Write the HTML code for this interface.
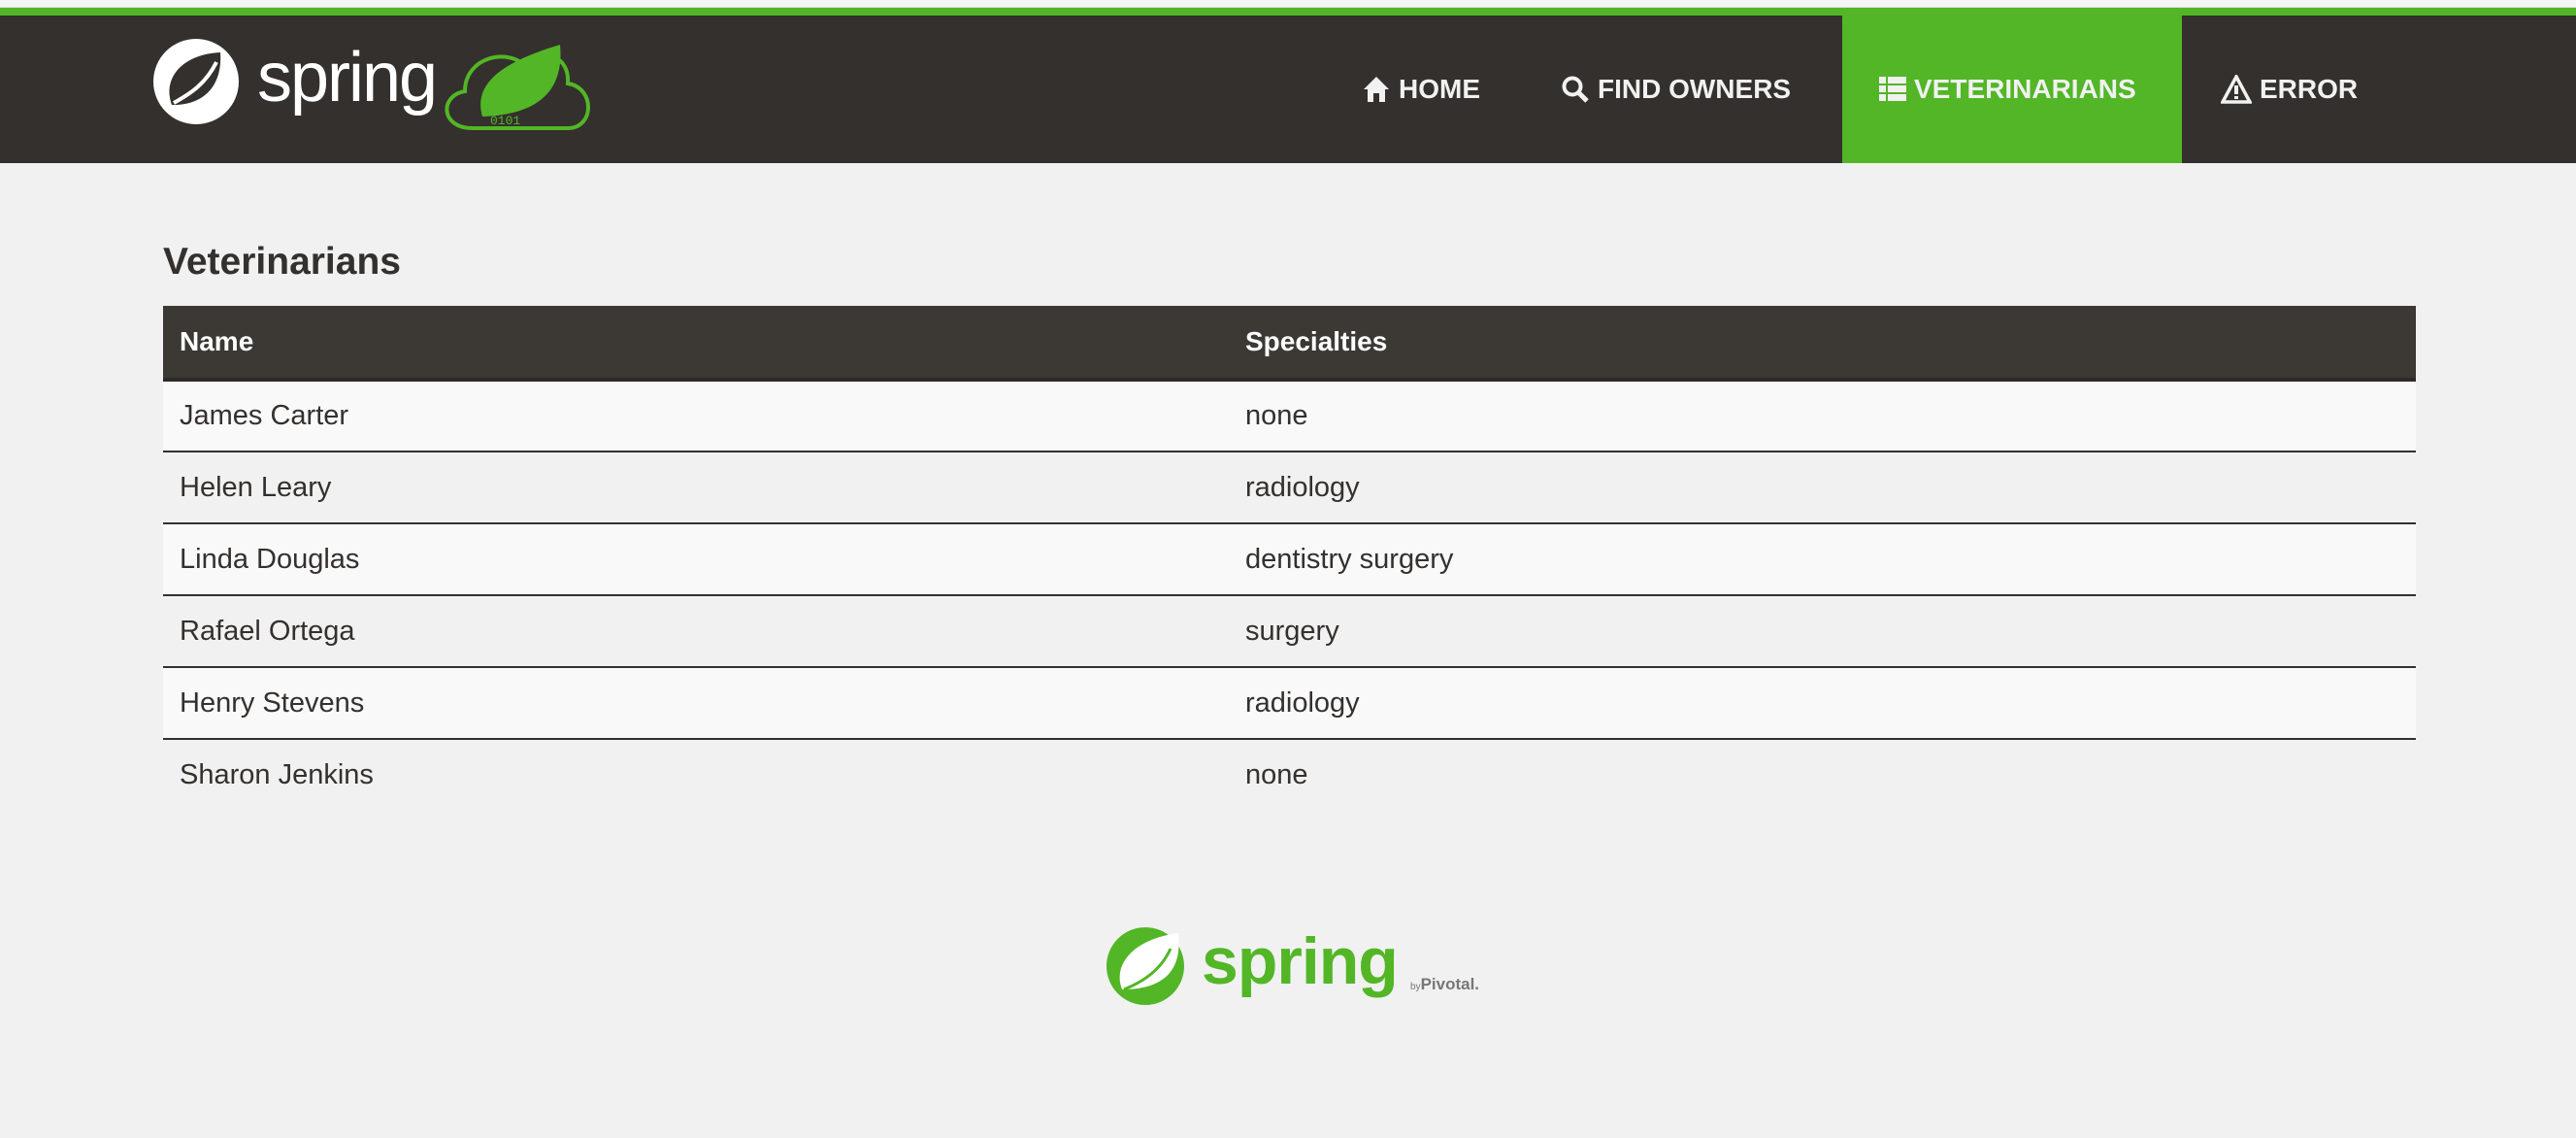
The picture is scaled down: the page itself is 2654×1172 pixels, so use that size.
<!DOCTYPE html>
<html><head><meta charset="utf-8"><style>
*{margin:0;padding:0;box-sizing:border-box}
body{width:2654px;height:1172px;background:#f1f1f1;font-family:"Liberation Sans",sans-serif;position:relative;overflow:hidden}
.top{position:absolute;left:0;top:0;width:2654px;height:8px;background:#f5f5f5;border-bottom:1px solid #ddd}
.green{position:absolute;left:0;top:8px;width:2654px;height:8px;background:#52b626}
.nav{position:absolute;left:0;top:16px;width:2654px;height:152px;background:#34302d}
.item{position:absolute;top:0;height:152px;display:flex;align-items:center;color:#f1f1f1;font-weight:bold;font-size:28px;letter-spacing:0}
.item svg{margin-right:8px}
.active{background:#52b626}
h2{position:absolute;left:168px;top:248px;font-size:39px;color:#34302d;font-weight:bold}
table{position:absolute;left:168px;top:315px;width:2321px;border-collapse:collapse;font-size:29px;color:#34302d}
th{background:#3c3834;color:#fff;text-align:left;height:76px;padding-left:17px;border-bottom:4px solid #2d2a27;font-size:28px}
td{height:74px;padding-left:17px;border-top:2px solid #34302d}
tr:nth-child(odd) td{background:#f9f9f9}
tr:nth-child(even) td{background:#f1f1f1}
tbody tr:first-child td{border-top:none}
</style></head><body>
<div class="top"></div><div class="green"></div>
<div class="nav">
 <svg style="position:absolute;left:157px;top:20px" width="460" height="100" viewBox="0 0 460 100">
  <circle cx="45" cy="48" r="44" fill="#fff"/>
  <path d="M20 72 C10 45 30 20 70 18 C72 45 60 70 25 72 Z" fill="#34302d"/>
  <path d="M22 70 C40 60 55 50 66 28" stroke="#fff" stroke-width="4" fill="none"/>
  <text x="108" y="68" font-family="Liberation Sans,sans-serif" font-size="72" fill="#fff" letter-spacing="-2">spring</text>
  <path d="M330 96 C296 96 296 62 322 58 C322 22 368 12 386 34 C404 12 430 22 428 50 C456 54 456 96 428 96 Z" fill="none" stroke="#52b626" stroke-width="4"/>
  <path d="M340 84 C330 50 360 28 420 10 C424 52 404 82 340 84 Z" fill="#52b626"/>
  <text x="348" y="92" font-size="13" fill="#52b626" font-family="Liberation Mono,monospace">0101</text>
 </svg>
 <div class="item" style="left:1403px"><svg width="30" height="30" viewBox="0 0 30 30"><path d="M15 2 L28 15 H24 V28 H18 V19 H12 V28 H6 V15 H2 Z" fill="#f1f1f1"/></svg>HOME</div>
 <div class="item" style="left:1608px"><svg width="30" height="30" viewBox="0 0 30 30"><circle cx="12" cy="12" r="8.5" stroke="#f1f1f1" stroke-width="4" fill="none"/><path d="M18 18 L27 27" stroke="#f1f1f1" stroke-width="5"/></svg>FIND OWNERS</div>
 <div class="item active" style="left:1898px;width:350px;padding-left:38px"><svg width="28" height="30" viewBox="0 0 28 30"><g fill="#f1f1f1"><rect x="0" y="2" width="7" height="7"/><rect x="9" y="2" width="19" height="7"/><rect x="0" y="11" width="7" height="7"/><rect x="9" y="11" width="19" height="7"/><rect x="0" y="20" width="7" height="7"/><rect x="9" y="20" width="19" height="7"/></g></svg>VETERINARIANS</div>
 <div class="item" style="left:2288px"><svg width="32" height="30" viewBox="0 0 32 30"><path d="M16 2 L30 28 H2 Z" fill="none" stroke="#f1f1f1" stroke-width="3.5"/><rect x="14" y="11" width="4" height="9" fill="#f1f1f1"/><rect x="14" y="22" width="4" height="3" fill="#f1f1f1"/></svg>ERROR</div>
</div>
<h2>Veterinarians</h2>
<table>
<thead><tr><th style="width:1098px">Name</th><th>Specialties</th></tr></thead>
<tbody>
<tr><td>James Carter</td><td>none</td></tr>
<tr><td>Helen Leary</td><td>radiology</td></tr>
<tr><td>Linda Douglas</td><td>dentistry surgery</td></tr>
<tr><td>Rafael Ortega</td><td>surgery</td></tr>
<tr><td>Henry Stevens</td><td>radiology</td></tr>
<tr><td>Sharon Jenkins</td><td>none</td></tr>
</tbody></table>
<svg style="position:absolute;left:1138px;top:953px" width="400" height="84" viewBox="0 0 400 84">
 <circle cx="42" cy="42" r="40" fill="#52b626"/>
 <path d="M18 66 C8 40 30 14 76 8 C80 44 64 66 18 66 Z" fill="#fff"/>
 <path d="M20 66 C40 58 58 46 68 24" stroke="#52b626" stroke-width="3" fill="none"/>
 <text x="100" y="60" font-family="Liberation Sans,sans-serif" font-size="68" fill="#52b626" font-weight="bold" letter-spacing="-1">spring</text>
 <text x="315" y="66" font-family="Liberation Sans,sans-serif" font-size="17" fill="#777" font-weight="bold"><tspan font-size="10" font-weight="normal">by</tspan>Pivotal.</text>
</svg>
</body></html>
